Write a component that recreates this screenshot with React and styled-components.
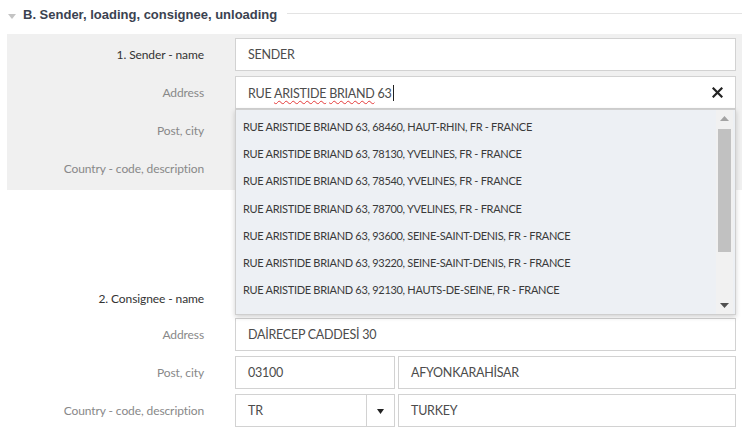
import React from "react";
import styled, { createGlobalStyle } from "styled-components";

const Global = createGlobalStyle`
  html, body { margin: 0; padding: 0; background: #fff; }
  body { font-family: Lato, "Open Sans", sans-serif; width: 742px; height: 433px; overflow: hidden; }
  * { box-sizing: border-box; }
`;

const Page = styled.div`
  width: 742px;
  position: relative;
`;

const SectionHeader = styled.div`
  display: flex;
  align-items: center;
  height: 28px;
  padding-left: 8px;
`;

const Caret = styled.span`
  width: 0;
  height: 0;
  border-left: 4.5px solid transparent;
  border-right: 4.5px solid transparent;
  border-top: 5px solid #c4c4c4;
  margin-top: 5px;
`;

const Title = styled.h2`
  margin: 0 0 0 7px;
  font-family: "Liberation Sans", Arial, sans-serif;
  font-weight: bold;
  font-size: 13px;
  color: #3b4250;
  white-space: nowrap;
`;

const Rule = styled.div`
  flex: 1;
  height: 1px;
  background: #e3e3e3;
  margin-left: 10px;
  margin-top: -1px;
`;

const Panel = styled.div`
  margin: 6px 0 0 7px;
  padding: ${(p) => p.$pad};
  background: ${(p) => (p.$shaded ? "#f0f0f0" : "transparent")};
  display: grid;
  grid-template-columns: 197px 1fr;
  column-gap: 31px;
  row-gap: 5px;
  padding-right: 6px;
`;

const Label = styled.div`
  font-size: 12px;
  letter-spacing: -0.1px;
  color: ${(p) => (p.$strong ? "#333" : "#888")};
  text-align: right;
  align-self: center;
  white-space: nowrap;
  padding-top: ${(p) => p.$offset || 0}px;
`;

const Fields = styled.div`
  display: flex;
  gap: 3px;
  position: relative;
`;

const Field = styled.div`
  height: 33px;
  flex: ${(p) => (p.$w ? `0 0 ${p.$w}px` : "1")};
  border: 1px solid #d2d2d2;
  background: #fff;
  display: flex;
  align-items: center;
  padding-left: 12px;
  font-size: 12.5px;
  letter-spacing: -0.25px;
  color: #4c4c4c;
  white-space: nowrap;
`;

const Typo = styled.span`
  text-decoration: underline wavy #e43a3a;
  text-decoration-thickness: 1px;
  text-underline-offset: 2px;
`;

const TextCaret = styled.span`
  display: inline-block;
  width: 1px;
  height: 16px;
  background: #222;
  margin-left: 1px;
  vertical-align: -3px;
`;

const Clear = styled.button`
  margin-left: auto;
  margin-right: 12px;
  border: 0;
  background: none;
  padding: 0;
  display: flex;
  cursor: pointer;
`;

const SelectArrow = styled.div`
  margin-left: auto;
  height: 100%;
  width: 28px;
  border-left: 1px solid #d2d2d2;
  display: flex;
  align-items: center;
  justify-content: center;
  padding-top: 2px;
`;

const Dropdown = styled.div`
  position: absolute;
  top: 33px;
  left: 0;
  right: 0;
  height: 206px;
  background: #edf0f4;
  border: 1px solid #cfcfcf;
  box-shadow: 0 2px 5px rgba(0, 0, 0, 0.18);
  display: flex;
  z-index: 10;
`;

const Options = styled.ul`
  list-style: none;
  margin: 0;
  padding: 3px 0 0 0;
  flex: 1;
`;

const Option = styled.li`
  height: 27.2px;
  line-height: 27px;
  padding-left: 7px;
  font-size: 11px;
  letter-spacing: -0.3px;
  color: #3a3a3a;
  white-space: nowrap;
`;

const Scrollbar = styled.div`
  width: 17px;
  margin-right: 2px;
  background: #f1f1f1;
  display: flex;
  flex-direction: column;
  align-items: center;
`;

const ScrollArrow = styled.div`
  height: 17px;
  width: 100%;
  display: flex;
  align-items: center;
  justify-content: center;
`;

const Track = styled.div`
  flex: 1;
  width: 100%;
  display: flex;
  justify-content: center;
`;

const Thumb = styled.div`
  width: 13px;
  height: 123px;
  background: #c1c1c1;
  margin-top: 2px;
`;

const Spacer = styled.div`
  height: 84px;
`;

const options = [
  "RUE ARISTIDE BRIAND 63, 68460, HAUT-RHIN, FR - FRANCE",
  "RUE ARISTIDE BRIAND 63, 78130, YVELINES, FR - FRANCE",
  "RUE ARISTIDE BRIAND 63, 78540, YVELINES, FR - FRANCE",
  "RUE ARISTIDE BRIAND 63, 78700, YVELINES, FR - FRANCE",
  "RUE ARISTIDE BRIAND 63, 93600, SEINE-SAINT-DENIS, FR - FRANCE",
  "RUE ARISTIDE BRIAND 63, 93220, SEINE-SAINT-DENIS, FR - FRANCE",
  "RUE ARISTIDE BRIAND 63, 92130, HAUTS-DE-SEINE, FR - FRANCE",
];

export default function App() {
  return (
    <Page>
      <Global />
      <SectionHeader>
        <Caret />
        <Title>B. Sender, loading, consignee, unloading</Title>
        <Rule />
      </SectionHeader>

      <Panel $shaded $pad="4px 6px 5px 0">
        <Label $strong>1. Sender - name</Label>
        <Fields>
          <Field>SENDER</Field>
        </Fields>

        <Label>Address</Label>
        <Fields>
          <Field>
            <span>
              RUE <Typo>ARISTIDE</Typo> <Typo>BRIAND</Typo> 63
              <TextCaret />
            </span>
            <Clear aria-label="clear">
              <svg width="11" height="11" viewBox="0 0 11 11">
                <path d="M1.5 1.5 L9.5 9.5 M9.5 1.5 L1.5 9.5" stroke="#222" strokeWidth="2.2" strokeLinecap="square" />
              </svg>
            </Clear>
          </Field>
          <Dropdown>
            <Options>
              {options.map((o) => (
                <Option key={o}>{o}</Option>
              ))}
            </Options>
            <Scrollbar>
              <ScrollArrow>
                <svg width="9" height="5" viewBox="0 0 9 5">
                  <path d="M0 5 L4.5 0 L9 5 Z" fill="#a3a3a3" />
                </svg>
              </ScrollArrow>
              <Track>
                <Thumb />
              </Track>
              <ScrollArrow>
                <svg width="9" height="5" viewBox="0 0 9 5">
                  <path d="M0 0 L4.5 5 L9 0 Z" fill="#505050" />
                </svg>
              </ScrollArrow>
            </Scrollbar>
          </Dropdown>
        </Fields>

        <Label>Post, city</Label>
        <Fields>
          <Field $w={160} />
          <Field />
        </Fields>

        <Label>Country - code, description</Label>
        <Fields>
          <Field $w={160} />
          <Field />
        </Fields>
      </Panel>

      <Spacer />

      <Panel $pad="0 6px 0 0">
        <Label $strong $offset={3}>2. Consignee - name</Label>
        <Fields>
          <Field />
        </Fields>

        <Label>Address</Label>
        <Fields>
          <Field>DAİRECEP CADDESİ 30</Field>
        </Fields>

        <Label>Post, city</Label>
        <Fields>
          <Field $w={160}>03100</Field>
          <Field>AFYONKARAHİSAR</Field>
        </Fields>

        <Label>Country - code, description</Label>
        <Fields>
          <Field $w={160}>
            TR
            <SelectArrow>
              <svg width="7" height="5" viewBox="0 0 7 5">
                <path d="M0 0 L7 0 L3.5 5 Z" fill="#222" />
              </svg>
            </SelectArrow>
          </Field>
          <Field>TURKEY</Field>
        </Fields>
      </Panel>
    </Page>
  );
}
